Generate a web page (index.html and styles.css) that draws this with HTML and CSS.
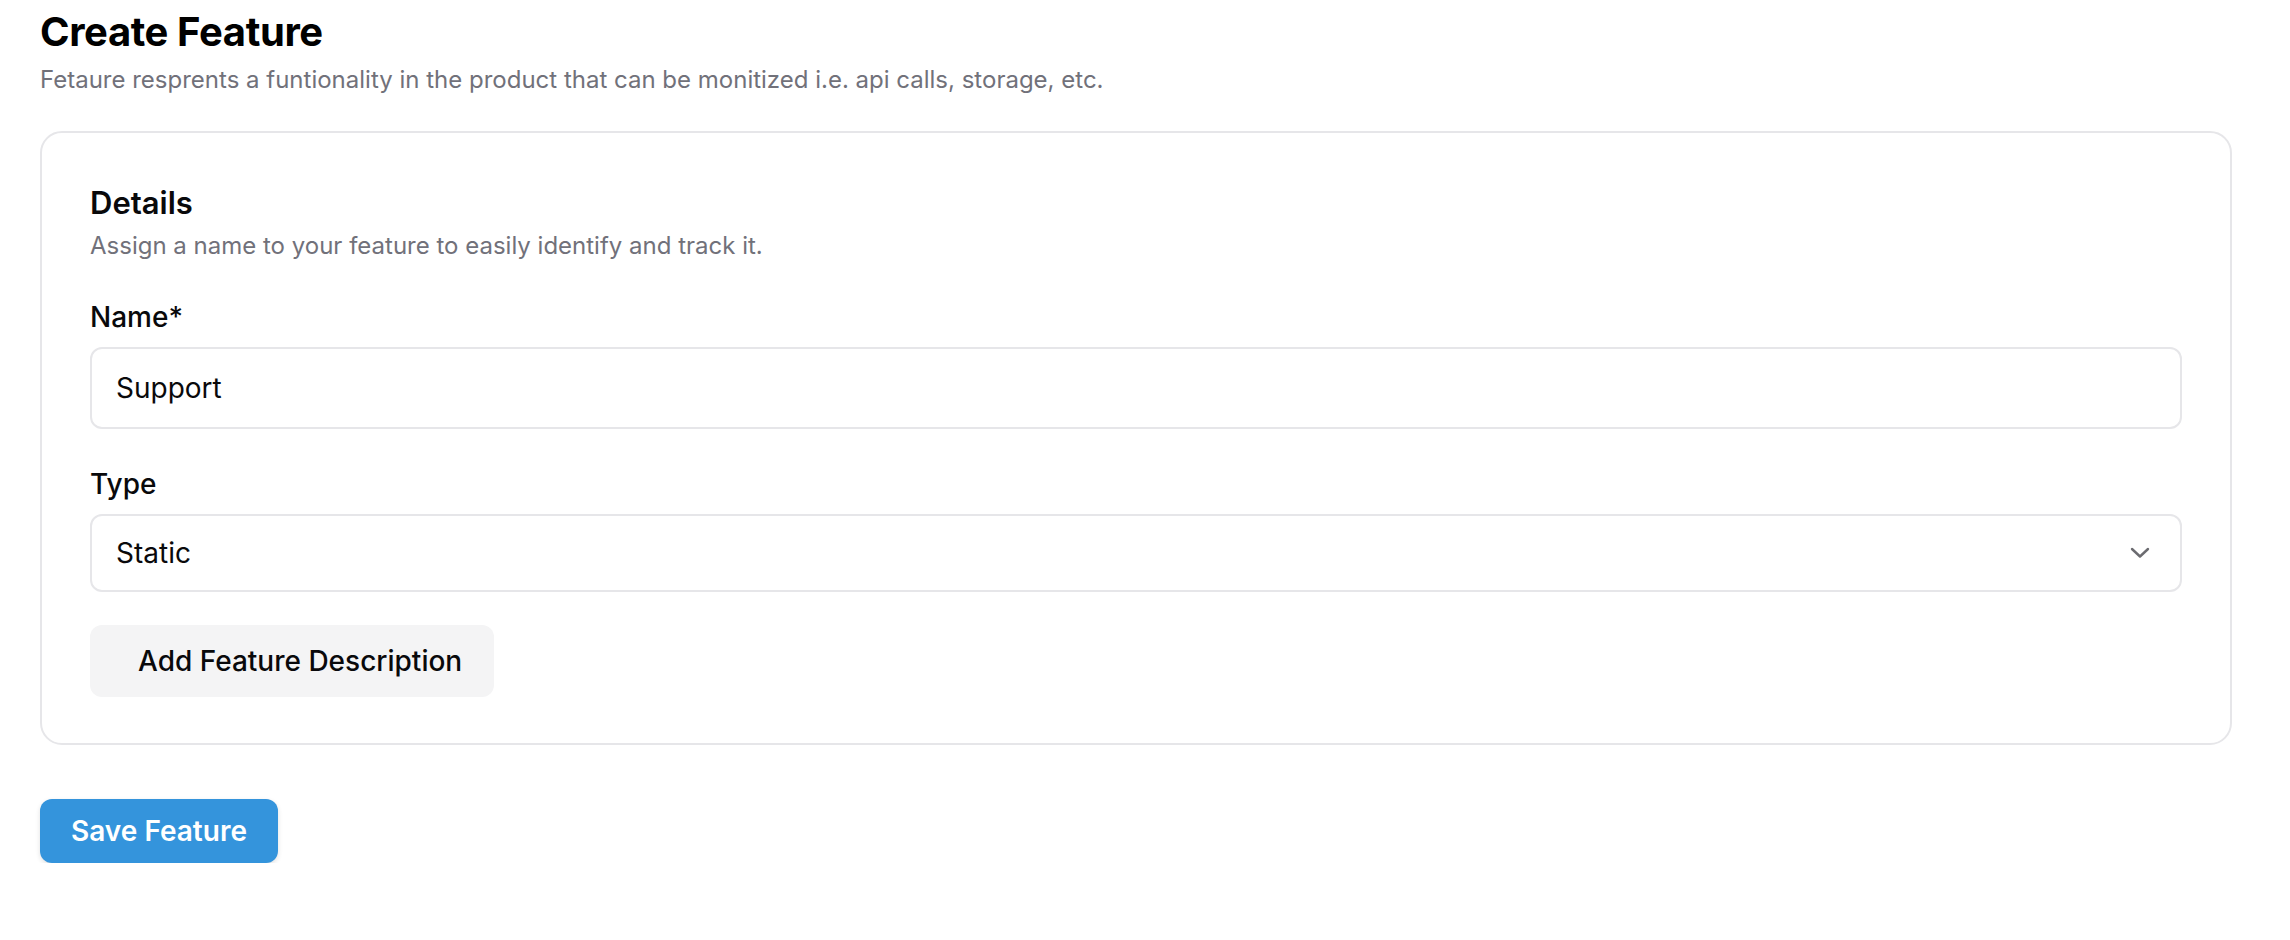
FILE: index.html
```html
<!DOCTYPE html>
<html lang="en">
<head>
<meta charset="utf-8">
<title>Create Feature</title>
<link rel="stylesheet" href="styles.css">
</head>
<body>
<main class="page">
  <header class="page-head">
    <h1 class="page-title">Create Feature</h1>
    <p class="page-sub">Fetaure resprents a funtionality in the product that can be monitized i.e. api calls, storage, etc.</p>
  </header>
  <section class="card">
    <h2 class="card-title">Details</h2>
    <p class="card-sub">Assign a name to your feature to easily identify and track it.</p>
    <label class="field-label" for="name">Name*</label>
    <div class="input">Support</div>
    <label class="field-label field-label-2">Type</label>
    <div class="select">
      <span>Static</span>
      <svg class="chev" width="20" height="12" viewBox="0 0 20 12" aria-hidden="true">
        <path d="M2 2 L10 9.5 L18 2" fill="none" stroke="#6b6b70" stroke-width="2.4" stroke-linecap="round" stroke-linejoin="round"/>
      </svg>
    </div>
    <button class="btn-ghost" type="button">Add Feature Description</button>
  </section>
  <button class="btn-primary" type="button">Save Feature</button>
</main>
</body>
</html>
```
FILE: styles.css
```css
* { box-sizing: border-box; }
html, body { margin: 0; padding: 0; background: #ffffff; }
body {
  font-family: Inter, "Noto Sans", "Liberation Sans", sans-serif;
  color: #09090b;
}
.page {
  padding: 8px 58px 0 40px;
  display: flex;
  flex-direction: column;
  align-items: flex-start;
}
.page-head { width: 100%; }
.page-title {
  margin: 0;
  font-size: 40px;
  line-height: 48px;
  font-weight: 700;
  letter-spacing: -0.4px;
  color: #000;
}
.page-sub {
  margin: 7px 0 0;
  font-size: 24px;
  line-height: 33px;
  color: #71717a;
}
.card {
  margin-top: 35px;
  width: 100%;
  border: 2px solid #e6e6e9;
  border-radius: 22px;
  padding: 50px 48px 46px 48px;
  display: flex;
  flex-direction: column;
  align-items: flex-start;
}
.card-title {
  margin: 0;
  font-size: 31px;
  line-height: 40px;
  font-weight: 600;
}
.card-sub {
  margin: 6px 0 0;
  font-size: 24px;
  line-height: 33px;
  color: #71717a;
}
.field-label {
  display: block;
  margin-top: 35px;
  font-size: 28px;
  line-height: 40px;
  font-weight: 500;
}
.input, .select {
  margin-top: 10px;
  width: 100%;
  border: 2px solid #e6e6e9;
  border-radius: 12px;
  padding: 0 24px;
  font-size: 28px;
  display: flex;
  align-items: center;
  color: #09090b;
}
.input { height: 82px; }
.select {
  height: 78px;
  justify-content: space-between;
  padding-right: 30px;
}
.chev { display: block; }
.btn-ghost {
  margin-top: 33px;
  height: 72px;
  padding: 0 32px 0 48px;
  border: 0;
  border-radius: 12px;
  background: #f4f4f5;
  font-family: inherit;
  font-size: 28px;
  font-weight: 500;
  color: #09090b;
}
.btn-primary {
  margin-top: 54px;
  height: 64px;
  width: 238px;
  border: 0;
  border-radius: 12px;
  background: #3494dc;
  color: #ffffff;
  font-family: inherit;
  font-size: 28px;
  font-weight: 600;
  box-shadow: 0 2px 5px rgba(0, 0, 0, 0.12);
}
```
